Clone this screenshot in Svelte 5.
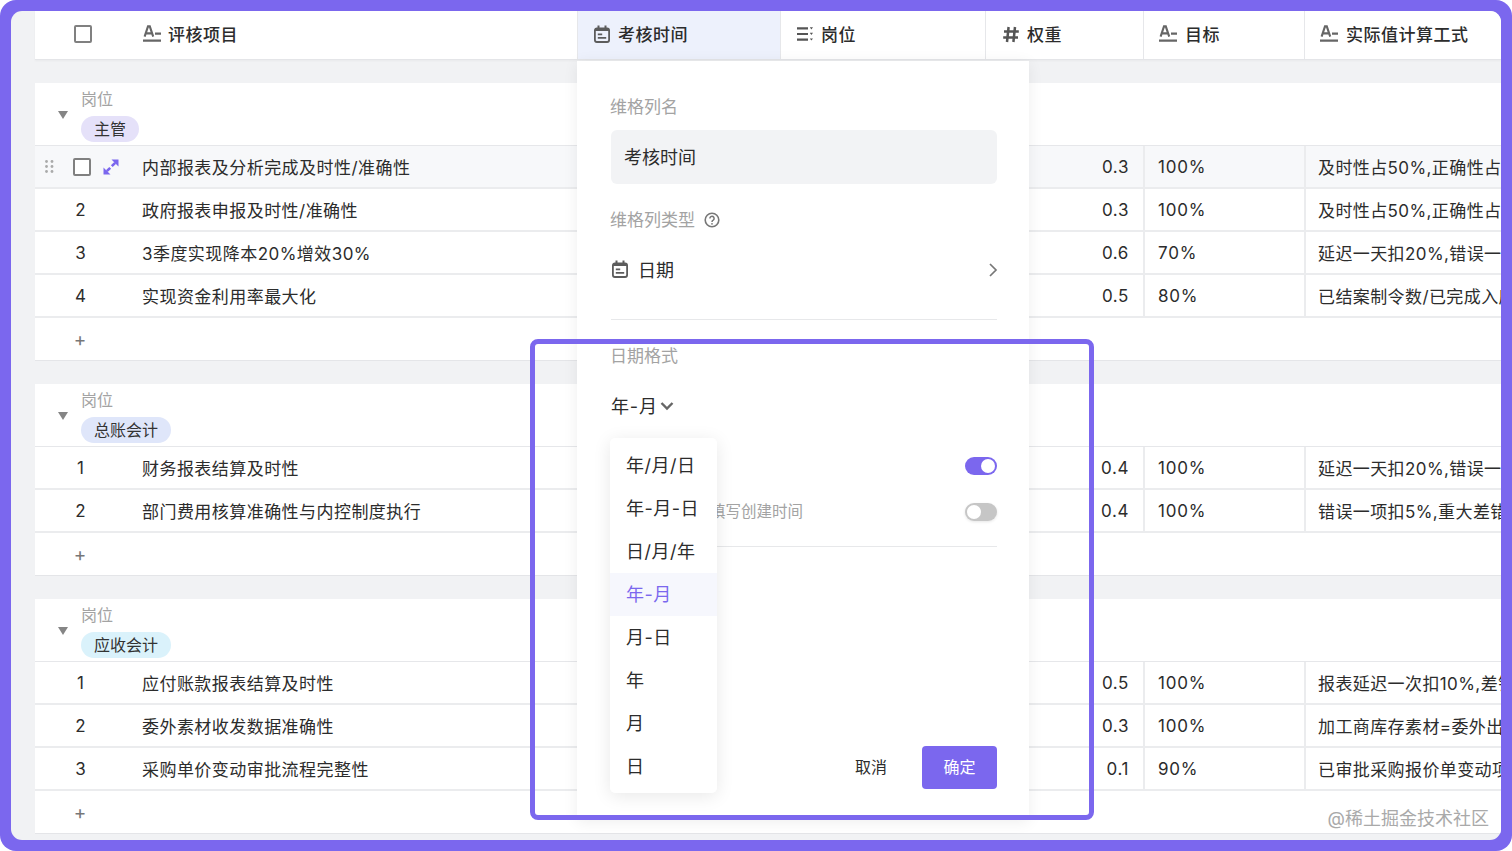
<script>
  const columns = [
    { name: '考核时间', icon: 'date', active: true },
    { name: '岗位', icon: 'list' },
    { name: '权重', icon: 'hash' },
    { name: '目标', icon: 'text' },
    { name: '实际值计算工式', icon: 'text' }
  ];
  const groups = [
    { tag: '主管', tone: 'violet', rows: [
      ['内部报表及分析完成及时性/准确性', '0.3', '100%', '及时性占50%,正确性占50%'],
      ['政府报表申报及时性/准确性', '0.3', '100%', '及时性占50%,正确性占50%'],
      ['3季度实现降本20%增效30%', '0.6', '70%', '延迟一天扣20%,错误一项扣10%'],
      ['实现资金利用率最大化', '0.5', '80%', '已结案制令数/已完成入库数量']
    ]},
    { tag: '总账会计', tone: 'blue', rows: [
      ['财务报表结算及时性', '0.4', '100%', '延迟一天扣20%,错误一项扣10%'],
      ['部门费用核算准确性与内控制度执行', '0.4', '100%', '错误一项扣5%,重大差错扣20%']
    ]},
    { tag: '应收会计', tone: 'cyan', rows: [
      ['应付账款报表结算及时性', '0.5', '100%', '报表延迟一次扣10%,差错一次扣5%'],
      ['委外素材收发数据准确性', '0.3', '100%', '加工商库存素材=委外出库数量'],
      ['采购单价变动审批流程完整性', '0.1', '90%', '已审批采购报价单变动项目数量']
    ]}
  ];
  const formats = ['年/月/日', '年-月-日', '日/月/年', '年-月', '月-日', '年', '月', '日'];
</script>

{#snippet icon(kind)}
  {#if kind === 'text'}
    <svg class="ico wide" viewBox="0 0 18 18" aria-hidden="true">
      <path d="M1.6 11.6 5 1.4h1.8l3.4 10.2M3 8.4h5.8" fill="none" stroke="#666" stroke-width="2.1"/>
      <path d="M12 8.6h6" stroke="#666" stroke-width="2.2"/>
      <path d="M0 15.6h18" stroke="#666" stroke-width="2.2"/>
    </svg>
  {:else if kind === 'date'}
    <svg class="ico" viewBox="0 0 16 18" aria-hidden="true">
      <rect x="0.9" y="3.4" width="14.2" height="13.6" rx="2" fill="none" stroke="#5c5c5c" stroke-width="1.8"/>
      <path d="M4.5 0.6v4M11.5 0.6v4" stroke="#5c5c5c" stroke-width="2"/>
      <path d="M1 5h14" stroke="#5c5c5c" stroke-width="2"/>
      <path d="M3.8 9.4h4.4M3.8 12.8h8.4" stroke="#5c5c5c" stroke-width="1.7"/>
    </svg>
  {:else if kind === 'list'}
    <svg class="ico" viewBox="0 0 16 18" aria-hidden="true">
      <path d="M0 3.4h11M0 9h11M0 14.6h11" stroke="#555" stroke-width="2.1"/>
      <path d="M12.8 2.2h3.2l-1.6 2.2zM12.8 7.8h3.2L14.4 10zM12.8 13.4h3.2l-1.6 2.2z" fill="#555"/>
    </svg>
  {:else if kind === 'hash'}
    <svg class="ico hash" viewBox="0 0 16 18" aria-hidden="true">
      <path d="M5.6 2 4 17M12 2l-1.6 15M1 6.6h14.8M0.2 12.4H15" stroke="#555" stroke-width="2.5" fill="none"/>
    </svg>
  {/if}
{/snippet}

<div class="frame">
  <div class="inner">
    <div class="head grid">
      <div class="first">
        <div class="lead"><span class="check"></span></div>
        {@render icon('text')}
        <span class="htext tight">评核项目</span>
      </div>
      {#each columns as col}
        <div class="hcell" class:active={col.active}>
          {@render icon(col.icon)}
          <span class="htext">{col.name}</span>
        </div>
      {/each}
    </div>

    {#each groups as group, g}
      <section class="group">
        <div class="ghead">
          <span class="tri"></span>
          <div class="gstack">
            <span class="glabel">岗位</span>
            <span class="tag {group.tone}">{group.tag}</span>
          </div>
        </div>
        {#each group.rows as row, i}
          <div class="row grid" class:hover={g === 0 && i === 0}>
            <div class="first">
              <div class="lead">
                {#if g === 0 && i === 0}
                  <svg class="dots" viewBox="0 0 9 13" aria-hidden="true">
                    <g fill="#aaa"><circle cx="1.5" cy="1.5" r="1.4"/><circle cx="7" cy="1.5" r="1.4"/><circle cx="1.5" cy="6.5" r="1.4"/><circle cx="7" cy="6.5" r="1.4"/><circle cx="1.5" cy="11.5" r="1.4"/><circle cx="7" cy="11.5" r="1.4"/></g>
                  </svg>
                  <span class="check in-row"></span>
                  <svg class="expand" viewBox="0 0 16 16" aria-hidden="true">
                    <path d="M8.5 0.5H15.5V7.5zM0.5 8.5 7.5 15.5H0.5z" fill="#7b67ee"/>
                    <path d="M12.2 3.8 8.8 7.2M3.8 12.2l3.4-3.4" stroke="#7b67ee" stroke-width="2.6"/>
                  </svg>
                {:else}
                  <span class="num">{i + 1}</span>
                {/if}
              </div>
              <span class="title">{row[0]}</span>
            </div>
            <div class="cell"></div>
            <div class="cell"></div>
            <div class="cell weight">{row[1]}</div>
            <div class="cell target">{row[2]}</div>
            <div class="cell formula">{row[3]}</div>
          </div>
        {/each}
        <div class="add"><span class="plus">+</span></div>
      </section>
    {/each}

    <aside class="popup">
      <div class="plabel first-label">维格列名</div>
      <div class="input">考核时间</div>
      <div class="plabel type-label">
        维格列类型
        <svg class="help" viewBox="0 0 16 16" aria-hidden="true">
          <circle cx="8" cy="8" r="6.8" fill="none" stroke="#777" stroke-width="1.6"/>
          <path d="M5.9 6.4a2.1 2.1 0 1 1 3.3 1.7c-.8.5-1.2 1-1.2 1.8" fill="none" stroke="#777" stroke-width="1.5"/>
          <circle cx="8" cy="11.8" r="0.9" fill="#777"/>
        </svg>
      </div>
      <div class="typerow">
        {@render icon('date')}
        <span class="tname">日期</span>
        <svg class="chev" viewBox="0 0 10 16" aria-hidden="true"><path d="M2 2l6 6-6 6" fill="none" stroke="#777" stroke-width="1.7"/></svg>
      </div>
      <div class="rule"></div>
      <div class="plabel fmt-label">日期格式</div>
      <div class="select">
        <span>年-月</span>
        <svg class="down" viewBox="0 0 14 10" aria-hidden="true"><path d="M1.5 2 7 7.5 12.5 2" fill="none" stroke="#666" stroke-width="2.4"/></svg>
      </div>
      <div class="toggles">
        <div class="trow"><span class="toggle on"><i></i></span></div>
        <div class="trow"><span class="tlabel">自动填写创建时间</span><span class="toggle"><i></i></span></div>
      </div>
      <div class="rule lower"></div>
      <div class="actions">
        <span class="cancel">取消</span>
        <span class="ok">确定</span>
      </div>
      <ul class="menu">
        {#each formats as f}
          <li class:sel={f === '年-月'}>{f}</li>
        {/each}
      </ul>
    </aside>

    <div class="highlight"></div>
    <div class="mark">@稀土掘金技术社区</div>
  </div>
</div>

<style>
  :global(body) { margin: 0; background: #fff; }
  .frame {
    width: 1512px; height: 851px; box-sizing: border-box; padding: 11px;
    background: #7b67ee; border-radius: 16px; overflow: hidden;
    font-family: Inter, "Noto Sans CJK SC", sans-serif; color: #2c2c2c; font-size: 17px;
  }
  .inner {
    position: relative; height: 829px; background: #f1f2f4; border-radius: 11px;
    overflow: hidden; padding-left: 24px; box-sizing: border-box;
  }
  .grid { display: grid; grid-template-columns: 542px 203px 205px 158px 161px 197px; }
  .head {
    height: 48px; background: #fff; border-bottom: 1px solid #e4e5e8; box-shadow: 0 1px 2px #0000000a;
    box-sizing: content-box; margin-bottom: 23px;
  }
  .first { display: flex; align-items: center; min-width: 0; }
  .head .first, .hcell { padding-bottom: 3px; box-sizing: border-box; }
  .lead { width: 107px; flex: none; display: flex; align-items: center; height: 100%; position: relative; }
  .head .lead { padding-left: 39px; box-sizing: border-box; height: auto; }
  .check { width: 14px; height: 14px; border: 2px solid #808080; border-radius: 2px; display: block; flex: none; background: #fff; }
  .ico { width: 16px; height: 18px; flex: none; display: block; }
  .ico.wide { width: 18px; margin-left: 1px; }
  .hcell .ico.wide { margin-left: -1px; }
  .ico.hash { margin-left: 1px; }
  .htext { margin-left: 8px; font-weight: 500; letter-spacing: 0.5px; white-space: nowrap; }
  .htext.tight { margin-left: 7px; }
  .hcell { display: flex; align-items: center; padding-left: 16px; border-left: 1px solid #e6e7ea; }
  .hcell.active { background: #edf1fc; }
  .group { background: #fff; margin-bottom: 23px; }
  .ghead { height: 63px; box-sizing: border-box; border-bottom: 1px solid #e6e7ea; display: flex; align-items: flex-start; padding: 6px 0 0 23px; }
  .tri { width: 0; height: 0; border-style: solid; border-color: transparent; border-width: 8px 5.5px 0; border-top-color: #858585; margin: 22px 13px 0 0; }
  .gstack { display: flex; flex-direction: column; align-items: flex-start; gap: 7px; }
  .glabel { font-size: 16px; line-height: 20px; color: #a3a3a3; }
  .tag { font-size: 16px; line-height: 26px; height: 26px; padding: 0 13px; border-radius: 13px; color: #333; }
  .violet { background: #e5e1f9; }
  .blue { background: #dfe6fa; }
  .cyan { background: #daf2fb; }
  .row { height: 43px; box-sizing: border-box; border-bottom: 2px solid #ebecee; }
  .row.hover { background: #f7f8fa; }
  .num { width: 91px; text-align: center; display: block; }
  .title { letter-spacing: 0.45px; white-space: nowrap; }
  .dots { width: 9px; height: 13px; margin-left: 10px; }
  .in-row { margin-left: 19px; }
  .expand { width: 16px; height: 16px; margin-left: 12px; }
  .cell { display: flex; align-items: center; border-left: 2px solid #ebecee; white-space: nowrap; overflow: hidden; }
  .weight { justify-content: flex-end; padding-right: 14px; letter-spacing: 0.6px; }
  .target { padding-left: 13px; letter-spacing: 0.8px; }
  .formula { padding-left: 12px; letter-spacing: 0.4px; }
  .add { height: 43px; box-sizing: border-box; border-bottom: 1px solid #e4e5e8; display: flex; align-items: center; }
  .plus { width: 90px; text-align: center; color: #777; font-size: 19px; }
  .popup {
    position: absolute; left: 566px; top: 50px; width: 452px; height: 759px; box-sizing: border-box;
    background: #fff; padding: 0 32px 0 34px; box-shadow: 0 2px 14px #00000012;
  }
  .plabel { color: #a3a3a3; line-height: 24px; display: flex; align-items: center; margin-left: -1px; }
  .first-label { margin-top: 34px; }
  .input { height: 54px; margin-top: 11px; background: #f2f3f5; border-radius: 6px; padding: 0 13px 2px; box-sizing: border-box; display: flex; align-items: center; font-size: 18px; }
  .type-label { margin-top: 24px; }
  .help { width: 16px; height: 16px; margin-left: 9px; }
  .typerow { display: flex; align-items: center; height: 48px; margin-top: 13px; font-size: 18px; }
  .typerow .ico { margin-left: 1px; }
  .tname { margin-left: 10px; flex: 1; }
  .chev { width: 10px; height: 16px; margin: 2px -1px 0 0; }
  .rule { height: 1px; background: #e7e8ea; margin-top: 26px; }
  .fmt-label { margin-top: 24px; }
  .select { display: flex; align-items: center; gap: 2px; height: 30px; margin-top: 22px; font-size: 18px; letter-spacing: 0.8px; }
  .down { width: 14px; height: 10px; margin-top: 2px; }
  .toggles { margin-top: 37px; display: flex; flex-direction: column; gap: 28px; }
  .trow { display: flex; align-items: center; justify-content: flex-end; height: 18px; position: relative; }
  .tlabel { position: absolute; left: 0; top: -2px; width: 192px; text-align: right; color: #a3a3a3; font-size: 15.5px; line-height: 22px; white-space: nowrap; }
  .toggle { width: 32px; height: 18px; border-radius: 9px; background: #c6c6c6; display: flex; align-items: center; padding: 0 2px; box-sizing: border-box; box-shadow: 0 1px 3px #0000001a; }
  .toggle i { width: 14px; height: 14px; border-radius: 50%; background: #fff; display: block; }
  .toggle.on { background: #7b67ee; justify-content: flex-end; box-shadow: none; }
  .rule.lower { margin-top: 25px; }
  .actions { position: absolute; right: 32px; top: 685px; display: flex; align-items: center; gap: 35px; font-size: 16px; }
  .cancel { padding-bottom: 3px; }
  .ok { width: 75px; height: 43px; background: #7b67ee; color: #fff; border-radius: 4px; display: flex; align-items: center; justify-content: center; padding-bottom: 3px; box-sizing: border-box; }
  .menu {
    position: absolute; left: 33px; top: 377px; width: 107px; margin: 0; padding: 6px 0 5px; list-style: none; box-sizing: border-box;
    background: #fff; border-radius: 5px; box-shadow: 0 3px 18px #00000018; font-size: 18px;
  }
  .menu li { height: 43px; line-height: 43px; padding-left: 16px; white-space: nowrap; letter-spacing: 0.5px; }
  .menu li.sel { background: #f6f7fd; color: #7b67ee; }
  .highlight {
    position: absolute; left: 519px; top: 328px; width: 564px; height: 481px; box-sizing: border-box;
    border: 5px solid #7b67ee; border-radius: 8px;
  }
  .mark { position: absolute; right: 12px; top: 797px; color: #a9a9a9; font-size: 18px; line-height: 22px; }
</style>
